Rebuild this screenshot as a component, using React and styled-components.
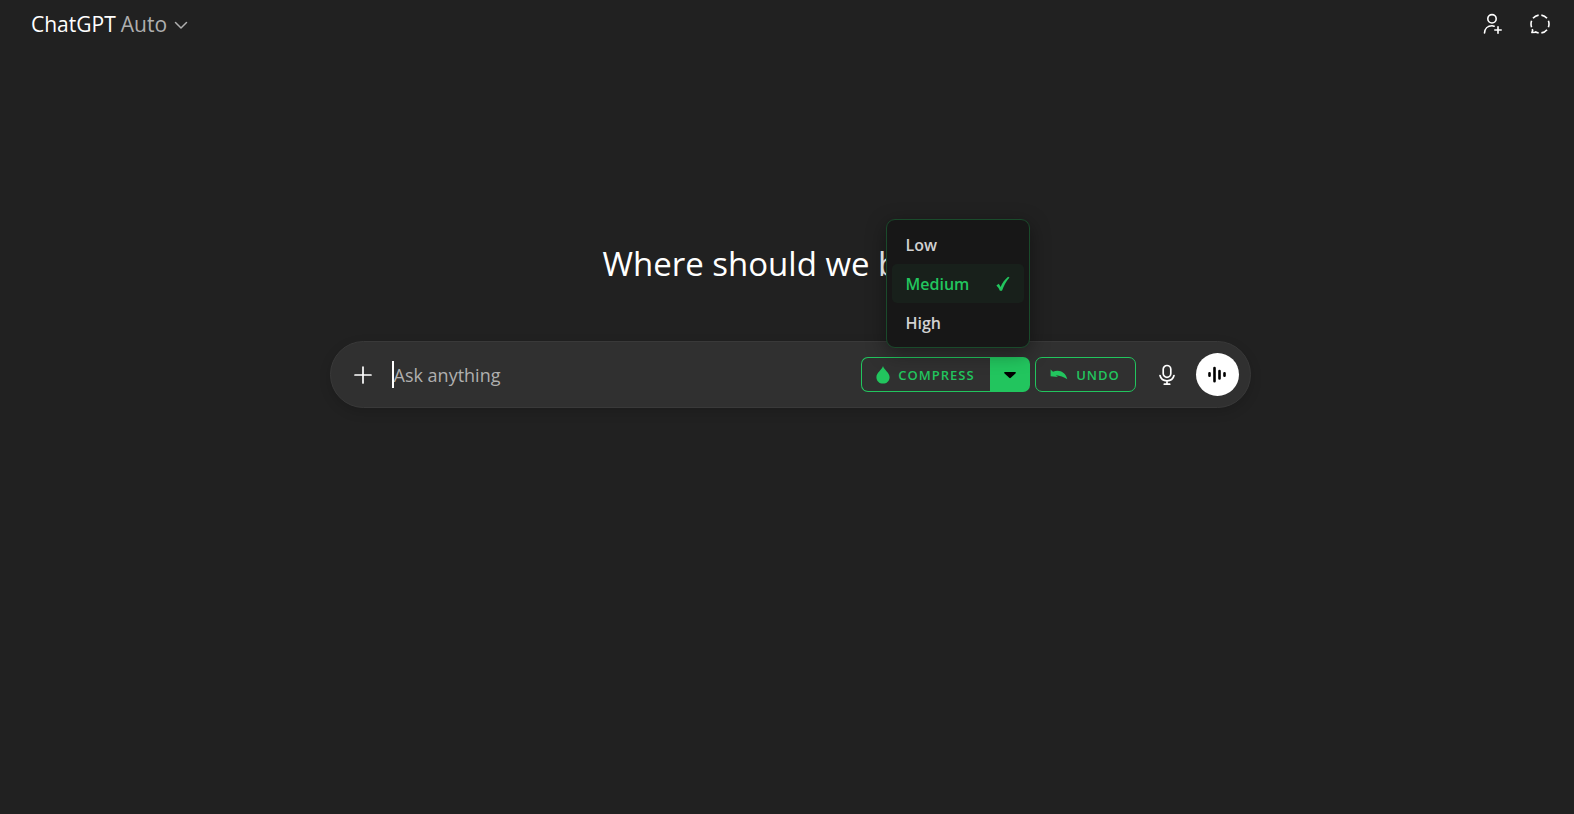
import React, { useState } from 'react'
import styled, { createGlobalStyle } from 'styled-components'

const GlobalStyle = createGlobalStyle`
  * {
    box-sizing: border-box;
  }
  body {
    margin: 0;
    background: #212121;
    color: #fff;
    font-family: "Open Sans", "Noto Sans", sans-serif;
  }
  button, input {
    font-family: inherit;
  }
`

const Page = styled.div`
  min-height: 100vh;
  display: flex;
  flex-direction: column;
`

const Header = styled.header`
  display: flex;
  align-items: center;
  justify-content: space-between;
  height: 48px;
  padding: 0 20px 0 31px;
`

const ModelButton = styled.button`
  display: flex;
  align-items: center;
  gap: 5px;
  padding: 0;
  border: 0;
  background: none;
  color: #fff;
  font-size: 21px;
  line-height: 32px;
  cursor: pointer;
  svg {
    margin-left: 2px;
  }
`

const ModelName = styled.span`
  color: #afafaf;
`

const HeaderActions = styled.div`
  display: flex;
  gap: 20px;
`

const IconButton = styled.button`
  display: flex;
  align-items: center;
  justify-content: center;
  flex: none;
  width: ${({ $size }) => $size || 28}px;
  height: ${({ $size }) => $size || 28}px;
  padding: 0;
  border: 0;
  border-radius: 50%;
  background: ${({ $filled }) => ($filled ? '#fff' : 'none')};
  color: ${({ $filled }) => ($filled ? '#000' : '#fff')};
  cursor: pointer;
`

const Main = styled.main`
  display: flex;
  flex-direction: column;
  align-items: center;
  padding: 192px 16px 0 22px;
`

const Title = styled.h1`
  margin: 0 0 53px;
  font-size: 33px;
  line-height: 48px;
  font-weight: 400;
`

const Composer = styled.form`
  display: flex;
  align-items: center;
  width: 100%;
  max-width: 921px;
  height: 67px;
  padding: 0 11px 0 18px;
  border: 1px solid #393939;
  border-radius: 34px;
  background: #303030;
  box-shadow: 0 4px 12px rgba(0, 0, 0, 0.15);
`

const Caret = styled.span`
  width: 2px;
  height: 27px;
  margin-left: 15px;
  background: #fff;
`

const PromptInput = styled.input`
  flex: 1;
  min-width: 0;
  padding: 0;
  border: 0;
  outline: 0;
  background: none;
  color: #fff;
  font-size: 18px;
  line-height: 28px;
  &::placeholder {
    color: #afafaf;
    opacity: 1;
  }
`

const Tools = styled.div`
  display: flex;
  align-items: center;
  gap: 5px;
`

const VoiceTools = styled.div`
  display: flex;
  align-items: center;
  gap: 15px;
  margin-left: 17px;
`

const Split = styled.div`
  position: relative;
  display: flex;
`

const ToolButton = styled.button`
  display: flex;
  align-items: center;
  justify-content: center;
  gap: 8px;
  width: ${({ $width }) => $width}px;
  height: 35px;
  padding: 0;
  border: 1px solid #22c55e;
  border-radius: ${({ $joined }) => ($joined ? '7px 0 0 7px' : '7px')};
  border-right-width: ${({ $joined }) => ($joined ? 0 : 1)}px;
  background: none;
  color: #22c55e;
  font-size: 13px;
  font-weight: 600;
  letter-spacing: 1px;
  cursor: pointer;
`

const LevelButton = styled.button`
  display: flex;
  align-items: center;
  justify-content: center;
  width: 40px;
  height: 35px;
  padding: 0;
  border: 0;
  border-radius: 0 7px 7px 0;
  background: #22c55e;
  color: #000;
  cursor: pointer;
`

const Menu = styled.div`
  position: absolute;
  right: 0;
  bottom: calc(100% + 9px);
  width: 144px;
  padding: 5px;
  border: 1px solid #1a4a2b;
  border-radius: 9px;
  background: #171717;
  box-shadow: 0 5px 20px rgba(0, 0, 0, 0.4);
`

const MenuItem = styled.button`
  display: flex;
  align-items: center;
  justify-content: space-between;
  width: 100%;
  height: 39px;
  padding: 0 14px;
  border: 0;
  border-radius: 5px;
  background: ${({ $active }) => ($active ? '#18201b' : 'none')};
  color: ${({ $active }) => ($active ? '#22c55e' : '#d1d1d1')};
  font-size: 16px;
  font-weight: 600;
  cursor: pointer;
`

const ChevronIcon = () => (
  <svg width="14" height="16" viewBox="0 0 14 16" fill="none" stroke="#afafaf" strokeWidth="1.5" strokeLinecap="round" strokeLinejoin="round">
    <path d="M1.500 6.500L7 12l5.500-5.500" />
  </svg>
)

const AddUserIcon = () => (
  <svg width="24" height="24" viewBox="0 0 24 24" fill="none" stroke="currentColor" strokeWidth="1.6" strokeLinecap="round">
    <circle cx="12" cy="6.800" r="4.200" />
    <path d="M4.500 21c.2-4.200 3.200-7.200 7.500-7.200.8 0 1.600.1 2.200.4M18 14.800v6.400M14.800 18h6.400" />
  </svg>
)

const TemporaryChatIcon = () => (
  <svg width="24" height="24" viewBox="0 0 24 24" fill="none" stroke="currentColor" strokeWidth="1.6" strokeLinejoin="round">
    <circle cx="12" cy="12" r="9" pathLength="60" strokeDasharray="7 3 7 3 7 3 4 6 7 3 7 3" strokeDashoffset="-1.5" transform="rotate(-90 12 12)" />
    <path d="M4 17.200l.7 1-.8 2.300 4.500-.2" />
  </svg>
)

const PlusIcon = () => (
  <svg width="20" height="20" viewBox="0 0 20 20" fill="none" stroke="currentColor" strokeWidth="1.7" strokeLinecap="round">
    <path d="M10 2v16M2 10h16" />
  </svg>
)

const DropIcon = () => (
  <svg width="14" height="18" viewBox="0 0 14 18" fill="currentColor">
    <path d="M7 0c.6 3.400 6.600 6.600 6.600 11.200C13.600 15 10.700 17.600 7 17.600S.4 15 .4 11.200C.4 6.600 6.400 3.400 7 0z" />
  </svg>
)

const UndoIcon = () => (
  <svg width="18" height="18" viewBox="0 0 18 18" fill="currentColor">
    <path d="M.6 3.500L3 5.800C8.500 3 15.500 5.500 17.300 13.200 14 10.800 9.800 9.700 5.800 9.200L8 11 .6 10.300z" />
  </svg>
)

const CaretDownIcon = () => (
  <svg width="12" height="12" viewBox="0 0 12 12" fill="currentColor">
    <path d="M.3 3h11.400v1.300L6.800 8.800q-.8.7-1.600 0L.3 4.300z" />
  </svg>
)

const CheckIcon = () => (
  <svg width="14" height="16" viewBox="0 0 14 16" fill="currentColor">
    <path d="M.4 9.500L2.700 7.800q1.100 1.200 1.900 3.200C6.200 7 8.900 3.300 12.100.7l1.400.7C10 5.400 7.800 9.500 6 14.800H3.900Q2.500 11.400.4 9.500z" />
  </svg>
)

const MicIcon = () => (
  <svg width="20" height="22" viewBox="0 0 20 22" fill="none" stroke="currentColor" strokeWidth="1.700" strokeLinecap="round">
    <rect x="6.200" y="1.500" width="7.600" height="11.800" rx="3.800" />
    <path d="M3 11.500c.8 3.300 3.500 5.300 7 5.300s6.200-2 7-5.300M10 17v3M7.300 20.200h5.400" />
  </svg>
)

const VoiceIcon = () => (
  <svg width="20" height="20" viewBox="0 0 20 20" fill="none" stroke="currentColor" strokeWidth="2.600" strokeLinecap="round">
    <path d="M2.500 8.200v2.600M7.500 3v13.200M12.500 6v7.500M17.500 8.200v2.600" />
  </svg>
)

const levels = ['Low', 'Medium', 'High']

const LevelMenu = ({ level, onSelect }) => (
  <Menu role="menu" aria-label="Compression level">
    {levels.map((name) => (
      <MenuItem
        key={name}
        type="button"
        role="menuitemradio"
        aria-checked={name === level}
        $active={name === level}
        onClick={() => onSelect(name)}
      >
        {name}
        {name === level && <CheckIcon />}
      </MenuItem>
    ))}
  </Menu>
)

const App = () => {
  const [level, setLevel] = useState('Medium')
  const [open, setOpen] = useState(true)

  return (
    <Page>
      <GlobalStyle />
      <Header>
        <ModelButton type="button">
          <span>ChatGPT</span>
          <ModelName>Auto</ModelName>
          <ChevronIcon />
        </ModelButton>
        <HeaderActions>
          <IconButton type="button" aria-label="Add people"><AddUserIcon /></IconButton>
          <IconButton type="button" aria-label="Temporary chat"><TemporaryChatIcon /></IconButton>
        </HeaderActions>
      </Header>
      <Main>
        <Title>Where should we begin?</Title>
        <Composer onSubmit={(e) => e.preventDefault()}>
          <IconButton type="button" aria-label="Add files"><PlusIcon /></IconButton>
          <Caret />
          <PromptInput aria-label="Message" placeholder="Ask anything" />
          <Tools>
            <Split>
              <ToolButton type="button" $width={129} $joined>
                <DropIcon />
                COMPRESS
              </ToolButton>
              <LevelButton type="button" aria-label="Compression level" aria-expanded={open} onClick={() => setOpen(!open)}>
                <CaretDownIcon />
              </LevelButton>
              {open && <LevelMenu level={level} onSelect={setLevel} />}
            </Split>
            <ToolButton type="button" $width={101}>
              <UndoIcon />
              UNDO
            </ToolButton>
          </Tools>
          <VoiceTools>
            <IconButton type="button" aria-label="Dictate"><MicIcon /></IconButton>
            <IconButton type="button" aria-label="Voice mode" $size={43} $filled><VoiceIcon /></IconButton>
          </VoiceTools>
        </Composer>
      </Main>
    </Page>
  )
}

export default App
